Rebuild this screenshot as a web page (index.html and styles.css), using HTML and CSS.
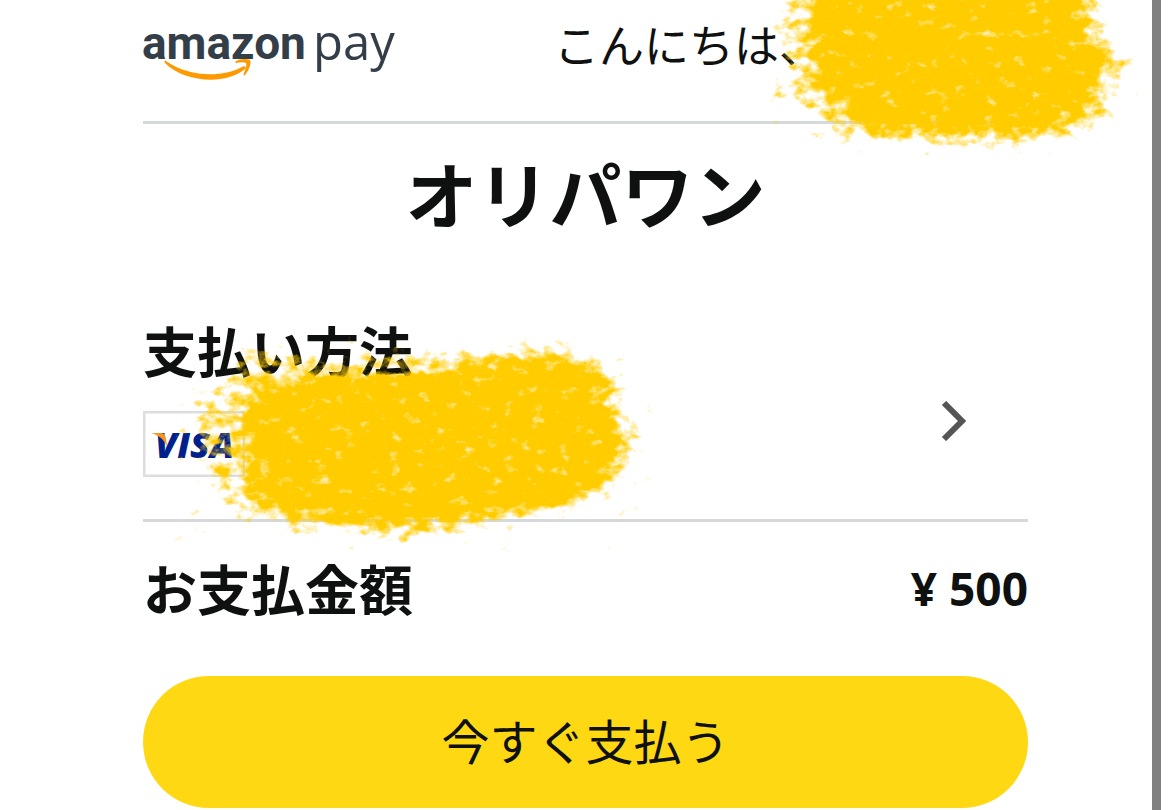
FILE: index.html
```html
<!DOCTYPE html>
<html lang="ja">
<head>
<meta charset="utf-8">
<meta name="viewport" content="width=device-width, initial-scale=1">
<title>Amazon Pay</title>
<link rel="stylesheet" href="styles.css">
</head>
<body>
<div class="sheet">
  <header class="header">
    <svg class="logo" viewBox="0 0 256 66" role="img" aria-label="amazon pay">
      <text class="logo-amazon" x="-1" y="43">amazon</text>
      <text class="logo-pay" x="170" y="44">pay</text>
      <path class="logo-smile" d="M23 45C46 61 78 62 99 51C102 49 104 51 102 53C83 69 42 67 22 47C21 45 22 44 23 45Z"/>
      <path class="logo-smile" d="M92 46C97 42 104 43 107 44C109 47 105 56 102 59C101 60 100 59 101 57C103 52 104 49 103 47C101 46 97 46 93 47Z"/>
    </svg>
    <p class="greeting">こんにちは、</p>
    <svg class="paint paint-name" viewBox="0 0 370 155" aria-hidden="true">
      <defs>
        <filter id="rough" x="-20%" y="-20%" width="140%" height="140%">
          <feGaussianBlur in="SourceAlpha" stdDeviation="6" result="soft"/>
          <feTurbulence type="fractalNoise" baseFrequency="0.07 0.1" numOctaves="6" seed="8" result="noise"/>
          <feComposite in="soft" in2="noise" operator="arithmetic" k1="0" k2="2" k3="2.6" k4="-1.95" result="mask"/>
          <feFlood flood-color="#ffcc05"/>
          <feComposite in2="mask" operator="in"/>
        </filter>
      </defs>
      <g filter="url(#rough)">
        <path fill-opacity="0.5" d="M34 -40L8 30L22 54L8 92L50 118L64 138L150 142L245 144L300 137L346 112L340 84L366 60L336 34L330 -40Z"/>
        <path d="M52 -40L42 20L46 80L76 108L90 130L150 132L245 135L290 128L328 104L326 82L346 60L320 40L306 -40Z"/>
      </g>
    </svg>
  </header>

  <main class="main">
    <h1 class="shop">オリパワン</h1>
    <section class="method">
      <div class="method-text">
        <h2 class="heading">支払い方法</h2>
        <svg class="card" viewBox="0 0 102 66" role="img" aria-label="VISA">
          <rect class="card-edge" x="1" y="1" width="100" height="64"/>
          <text class="card-name" x="12" y="47">VISA</text>
          <path class="card-flick" d="M8 22H18C22 22 23 25 24 35C20 28 16 24 8 22Z"/>
        </svg>
      </div>
      <button class="change" type="button" aria-label="支払い方法を変更">
        <svg class="chevron" viewBox="0 0 24 40" aria-hidden="true"><path d="M2 2L20 20L2 38"/></svg>
      </button>
      <svg class="paint paint-card" viewBox="0 0 480 220" aria-hidden="true">
        <g filter="url(#rough)">
          <path fill-opacity="0.5" d="M72 12L130 20L240 18L330 10L400 8L402 22L444 30L448 66L466 104L446 150L400 176L300 190L222 208L190 196L110 190L60 176L34 144L26 108L10 70L50 50Z"/>
          <path d="M84 52L150 42L230 38L330 26L400 22L430 36L434 70L452 104L430 146L392 168L300 182L222 190L120 180L84 164L76 132L70 84Z"/>
        </g>
      </svg>
    </section>
    <section class="total">
      <h2 class="heading">お支払金額</h2>
      <p class="amount">¥ 500</p>
    </section>
    <button class="pay" type="button">今すぐ支払う</button>
  </main>
</div>
</body>
</html>
```

FILE: styles.css
```css
* {
  box-sizing: border-box;
}

body {
  margin: 0;
  background: #fff;
  color: #0f1111;
  font-family: "Noto Sans CJK JP", sans-serif;
}

h1, h2, p {
  margin: 0;
}

.sheet {
  min-height: 100vh;
  margin-right: 9px;
  padding: 0 124px 2px 143px;
  border-right: 9px solid #808080;
}

.header {
  position: relative;
  display: flex;
  justify-content: space-between;
  align-items: flex-start;
  height: 124px;
  padding-top: 16px;
  border-bottom: 3px solid #d5d9d9;
}

.logo {
  width: 256px;
  height: 66px;
  overflow: visible;
}

.logo-amazon {
  fill: #333e48;
  font-family: Roboto, sans-serif;
  font-size: 46px;
  font-weight: 700;
}

.logo-pay {
  fill: #333e48;
  font-family: "Open Sans", sans-serif;
  font-size: 49px;
}

.logo-smile {
  fill: #f90;
}

.greeting {
  width: 474px;
  font-size: 45px;
  line-height: 56px;
}

.paint {
  position: absolute;
  pointer-events: none;
}

.paint-name {
  top: 0;
  right: -110px;
  width: 370px;
  height: 155px;
}

.shop {
  padding: 20px 0 28px;
  font-size: 72px;
  line-height: 96px;
  text-align: center;
}

.method {
  position: relative;
  display: flex;
  justify-content: space-between;
  align-items: center;
  padding: 50px 60px 42px 0;
  border-bottom: 3px solid #d5d9d9;
}

.method-text {
  display: grid;
  gap: 29px;
}

.heading {
  font-size: 54px;
  line-height: 64px;
}

.card {
  width: 102px;
  height: 66px;
}

.card-edge {
  fill: #fff;
  stroke: #ddd;
  stroke-width: 3;
}

.card-name {
  fill: #00208c;
  font-family: "Open Sans", sans-serif;
  font-size: 36px;
  font-style: italic;
  font-weight: 800;
}

.card-flick {
  fill: #f7941d;
}

.change {
  display: flex;
  margin-top: 46px;
  padding: 0;
  border: 0;
  background: none;
}

.chevron {
  width: 28px;
  height: 40px;
  fill: none;
  stroke: #555;
  stroke-width: 6;
}

.paint-card {
  top: 68px;
  left: 30px;
  width: 480px;
  height: 220px;
}

.total {
  display: flex;
  justify-content: space-between;
  align-items: center;
  padding: 34px 0 56px;
}

.amount {
  font-family: "Noto Sans", sans-serif;
  font-size: 46px;
  font-weight: 700;
  line-height: 64px;
}

.pay {
  display: block;
  width: 100%;
  padding: 27px 30px 33px;
  border: 0;
  border-radius: 66px;
  background: #ffd814;
  color: #0f1111;
  font-family: inherit;
  font-size: 48px;
  line-height: 72px;
}
```
